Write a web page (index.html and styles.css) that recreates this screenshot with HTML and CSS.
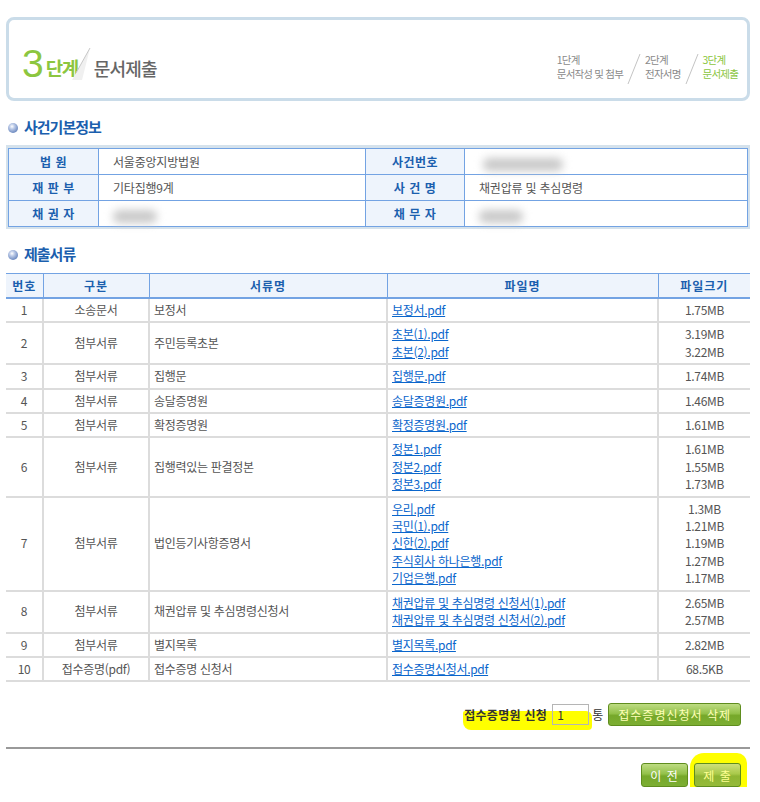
FILE: index.html
```html
<!DOCTYPE html>
<html lang="ko">
<head>
    <meta charset="UTF-8">
    <title>문서제출</title>
    <link rel="stylesheet" href="styles.css">
</head>
<body>
    <div class="page">
        <div class="step-box">
            <div class="step-title">
                <span class="step-num">3</span>
                <span class="step-word">단계</span>
                <svg class="step-fold" width="22" height="34" viewBox="0 0 22 34">
                    <polygon points="20,1 2,33 12,33" fill="#f0f0f0"/>
                    <line x1="20" y1="1" x2="6" y2="26" stroke="#c8c8c8" stroke-width="1"/>
                </svg>
                <span class="step-name">문서제출</span>
            </div>
            <div class="step-list">
                <div class="step">1단계<br>문서작성 및 첨부</div>
                <svg class="step-sep" width="14" height="30" viewBox="0 0 14 30"><line x1="13" y1="0" x2="1" y2="30" stroke="#c4c4c4"/></svg>
                <div class="step">2단계<br>전자서명</div>
                <svg class="step-sep" width="14" height="30" viewBox="0 0 14 30"><line x1="13" y1="0" x2="1" y2="30" stroke="#c4c4c4"/></svg>
                <div class="step current">3단계<br>문서제출</div>
            </div>
        </div>

        <h2 class="sec-title">사건기본정보</h2>
        <div class="info-frame">
            <table class="info">
                <colgroup>
                    <col style="width:90px"><col style="width:267px"><col style="width:99px"><col>
                </colgroup>
                <tr>
                    <th>법 원</th>
                    <td>서울중앙지방법원</td>
                    <th>사건번호</th>
                    <td><span class="masked wide"></span></td>
                </tr>
                <tr>
                    <th>재 판 부</th>
                    <td>기타집행9계</td>
                    <th>사 건 명</th>
                    <td>채권압류 및 추심명령</td>
                </tr>
                <tr>
                    <th>채 권 자</th>
                    <td><span class="masked"></span></td>
                    <th>채 무 자</th>
                    <td><span class="masked"></span></td>
                </tr>
            </table>
        </div>

        <h2 class="sec-title">제출서류</h2>
        <table class="docs">
            <colgroup>
                <col style="width:37px"><col style="width:106px"><col style="width:238px"><col style="width:271px"><col>
            </colgroup>
            <thead>
                <tr>
                    <th>번호</th>
                    <th>구분</th>
                    <th>서류명</th>
                    <th>파일명</th>
                    <th>파일크기</th>
                </tr>
            </thead>
            <tbody>
                <tr>
                    <td class="c">1</td><td class="c">소송문서</td><td>보정서</td>
                    <td><a href="#">보정서.pdf</a></td>
                    <td class="c">1.75MB</td>
                </tr>
                <tr>
                    <td class="c">2</td><td class="c">첨부서류</td><td>주민등록초본</td>
                    <td><a href="#">초본(1).pdf</a><br><a href="#">초본(2).pdf</a></td>
                    <td class="c">3.19MB<br>3.22MB</td>
                </tr>
                <tr>
                    <td class="c">3</td><td class="c">첨부서류</td><td>집행문</td>
                    <td><a href="#">집행문.pdf</a></td>
                    <td class="c">1.74MB</td>
                </tr>
                <tr>
                    <td class="c">4</td><td class="c">첨부서류</td><td>송달증명원</td>
                    <td><a href="#">송달증명원.pdf</a></td>
                    <td class="c">1.46MB</td>
                </tr>
                <tr>
                    <td class="c">5</td><td class="c">첨부서류</td><td>확정증명원</td>
                    <td><a href="#">확정증명원.pdf</a></td>
                    <td class="c">1.61MB</td>
                </tr>
                <tr>
                    <td class="c">6</td><td class="c">첨부서류</td><td>집행력있는 판결정본</td>
                    <td><a href="#">정본1.pdf</a><br><a href="#">정본2.pdf</a><br><a href="#">정본3.pdf</a></td>
                    <td class="c">1.61MB<br>1.55MB<br>1.73MB</td>
                </tr>
                <tr>
                    <td class="c">7</td><td class="c">첨부서류</td><td>법인등기사항증명서</td>
                    <td><a href="#">우리.pdf</a><br><a href="#">국민(1).pdf</a><br><a href="#">신한(2).pdf</a><br><a href="#">주식회사 하나은행.pdf</a><br><a href="#">기업은행.pdf</a></td>
                    <td class="c">1.3MB<br>1.21MB<br>1.19MB<br>1.27MB<br>1.17MB</td>
                </tr>
                <tr>
                    <td class="c">8</td><td class="c">첨부서류</td><td>채권압류 및 추심명령신청서</td>
                    <td><a href="#">채권압류 및 추심명령 신청서(1).pdf</a><br><a href="#">채권압류 및 추심명령 신청서(2).pdf</a></td>
                    <td class="c">2.65MB<br>2.57MB</td>
                </tr>
                <tr>
                    <td class="c">9</td><td class="c">첨부서류</td><td>별지목록</td>
                    <td><a href="#">별지목록.pdf</a></td>
                    <td class="c">2.82MB</td>
                </tr>
                <tr>
                    <td class="c">10</td><td class="c">접수증명(pdf)</td><td>접수증명 신청서</td>
                    <td><a href="#">접수증명신청서.pdf</a></td>
                    <td class="c">68.5KB</td>
                </tr>
            </tbody>
        </table>

        <div class="receipt">
            <span class="marked">
                <label for="copies" class="receipt-label">접수증명원 신청</label>
                <input type="text" id="copies" class="copies" value="1">
            </span>
            <span class="unit">통</span>
            <button type="button" class="btn-green btn-wide">접수증명신청서 삭제</button>
        </div>

        <div class="actions">
            <button type="button" class="btn-green">이 전</button>
            <span class="marked-blob">
                <button type="button" class="btn-green btn-submit">제 출</button>
            </span>
        </div>
    </div>
</body>
</html>
```

FILE: styles.css
```css
body {
    margin: 0;
    font-family: "Noto Sans CJK KR", "Noto Sans", sans-serif;
    font-size: 12px;
    color: #555;
    background-color: white;
}
.page {
    width: 744px;
    padding: 17px 0 0 6px;
}

/* step header */
.step-box {
    border: 3px solid #cadce9;
    border-radius: 8px;
    display: flex;
    align-items: center;
    justify-content: space-between;
    padding: 10px 9px 0 13px;
    height: 68px;
}
.step-title {
    display: flex;
    align-items: flex-end;
    height: 34px;
}
.step-num {
    font-family: "Liberation Sans", sans-serif;
    font-size: 39px;
    line-height: 34px;
    color: #8cc63f;
    letter-spacing: -1px;
    margin-right: 3px;
}
.step-word {
    font-size: 19px;
    font-weight: bold;
    line-height: 26px;
    color: #8cc63f;
    letter-spacing: -1.5px;
}
.step-fold {
    margin-left: -8px;
    margin-right: 2px;
}
.step-name {
    font-size: 18px;
    line-height: 26px;
    font-weight: 500;
    color: #666;
    letter-spacing: -0.8px;
}
.step-list {
    display: flex;
    align-items: center;
    gap: 4px;
    margin-top: 6px;
}
.step {
    font-size: 10.5px;
    line-height: 14px;
    color: #8a8a8a;
    letter-spacing: -0.8px;
}
.step.current {
    color: #8cc63f;
}
.step-sep {
    margin-top: 4px;
}

/* section titles */
.sec-title {
    display: flex;
    align-items: center;
    margin: 16px 0 8px;
    font-size: 15px;
    line-height: 20px;
    color: #1b5fae;
    letter-spacing: -1px;
}
.sec-title::before {
    content: "";
    width: 10px;
    height: 10px;
    border-radius: 50%;
    margin: 2px 6px 0 2px;
    background: radial-gradient(circle at 40% 35%, #ffffff 0, #b9c8e6 30%, #3e63a8 100%);
}
.info-frame + .sec-title {
    margin-top: 15px;
    margin-bottom: 9px;
}

/* case info */
.info-frame {
    background-color: #d5e2ec;
    padding: 3px 2px 2px;
}
.info {
    width: 100%;
    border-collapse: collapse;
    table-layout: fixed;
    background-color: white;
}
.info th,
.info td {
    border: 1px solid #73a3e3;
    height: 25px;
    line-height: 17px;
}
.info th {
    background-color: #eef4fc;
    color: #1b5fae;
    font-weight: bold;
    text-align: center;
    padding: 0;
    letter-spacing: 0.5px;
}
.info td {
    padding: 0 12px 0 14px;
    letter-spacing: -0.2px;
}
.masked {
    display: inline-block;
    width: 44px;
    height: 13px;
    margin-top: 3px;
    background-color: #c9c9c9;
    border-radius: 6px;
    filter: blur(4px);
    vertical-align: middle;
}
.masked.wide {
    width: 80px;
    margin-left: 4px;
}

/* documents */
.docs {
    width: 100%;
    border-collapse: collapse;
    table-layout: fixed;
}
.docs th {
    background-color: #eef4fc;
    color: #1b5fae;
    font-weight: bold;
    height: 23px;
    padding: 0;
    border-top: 1px solid #73a3e3;
    border-bottom: 2px solid #73a3e3;
    border-left: 1px solid #73a3e3;
    letter-spacing: 1px;
}
.docs th:first-child,
.docs td:first-child {
    border-left: none;
}
.docs td {
    padding: 2px 4px 3px;
    line-height: 17.4px;
    border-bottom: 2px solid #dcdcdc;
    border-left: 2px solid #dcdcdc;
    letter-spacing: -0.3px;
    vertical-align: middle;
}
.docs td.c {
    text-align: center;
}
.docs a {
    color: #0a66cc;
    text-decoration: underline;
}

/* receipt request */
.receipt {
    display: flex;
    justify-content: flex-end;
    align-items: center;
    gap: 3px;
    margin: 21px 9px 0 0;
    height: 23px;
}
.marked {
    position: relative;
    isolation: isolate;
    display: flex;
    align-items: center;
    gap: 5px;
}
.marked::before {
    content: "";
    position: absolute;
    left: -1px;
    right: -3px;
    top: 7px;
    bottom: -5px;
    background-color: #ffff00;
    border-radius: 2px 6px 4px 8px;
    z-index: -1;
}
.receipt-label {
    font-weight: bold;
    color: #333;
    letter-spacing: 0.3px;
}
.copies {
    width: 37px;
    height: 21px;
    box-sizing: border-box;
    border: 1px solid #b5b5b5;
    background: transparent;
    font-family: inherit;
    font-size: 12px;
    padding: 0 4px;
    color: #333;
}
.unit {
    color: #333;
    margin-right: 2px;
}
.btn-green {
    height: 24px;
    min-width: 47px;
    padding: 0 8px;
    border: 1px solid #5f8d1e;
    border-radius: 3px;
    background: linear-gradient(#bedc82 0%, #93c14a 45%, #76a82a 55%, #7cae33 100%);
    color: white;
    font-family: inherit;
    font-size: 12px;
    letter-spacing: 1px;
    cursor: pointer;
}
.btn-wide {
    color: #ffffb8;
    padding: 0 9px;
    height: 23px;
}

/* bottom actions */
.actions {
    display: flex;
    justify-content: flex-end;
    gap: 6px;
    margin-top: 21px;
    padding: 14px 9px 0 0;
    border-top: 2px solid #999;
}
.marked-blob {
    position: relative;
    isolation: isolate;
    display: flex;
}
.marked-blob::before {
    content: "";
    position: absolute;
    left: -4px;
    right: -6px;
    top: -10px;
    bottom: -16px;
    background-color: #ffff00;
    border-radius: 14px 10px 16px 12px;
    z-index: -1;
}
.btn-submit {
    color: #ffff90;
    background: linear-gradient(#cfe07a 0%, #a9c94a 45%, #8fb532 55%, #95ba3a 100%);
}
```
